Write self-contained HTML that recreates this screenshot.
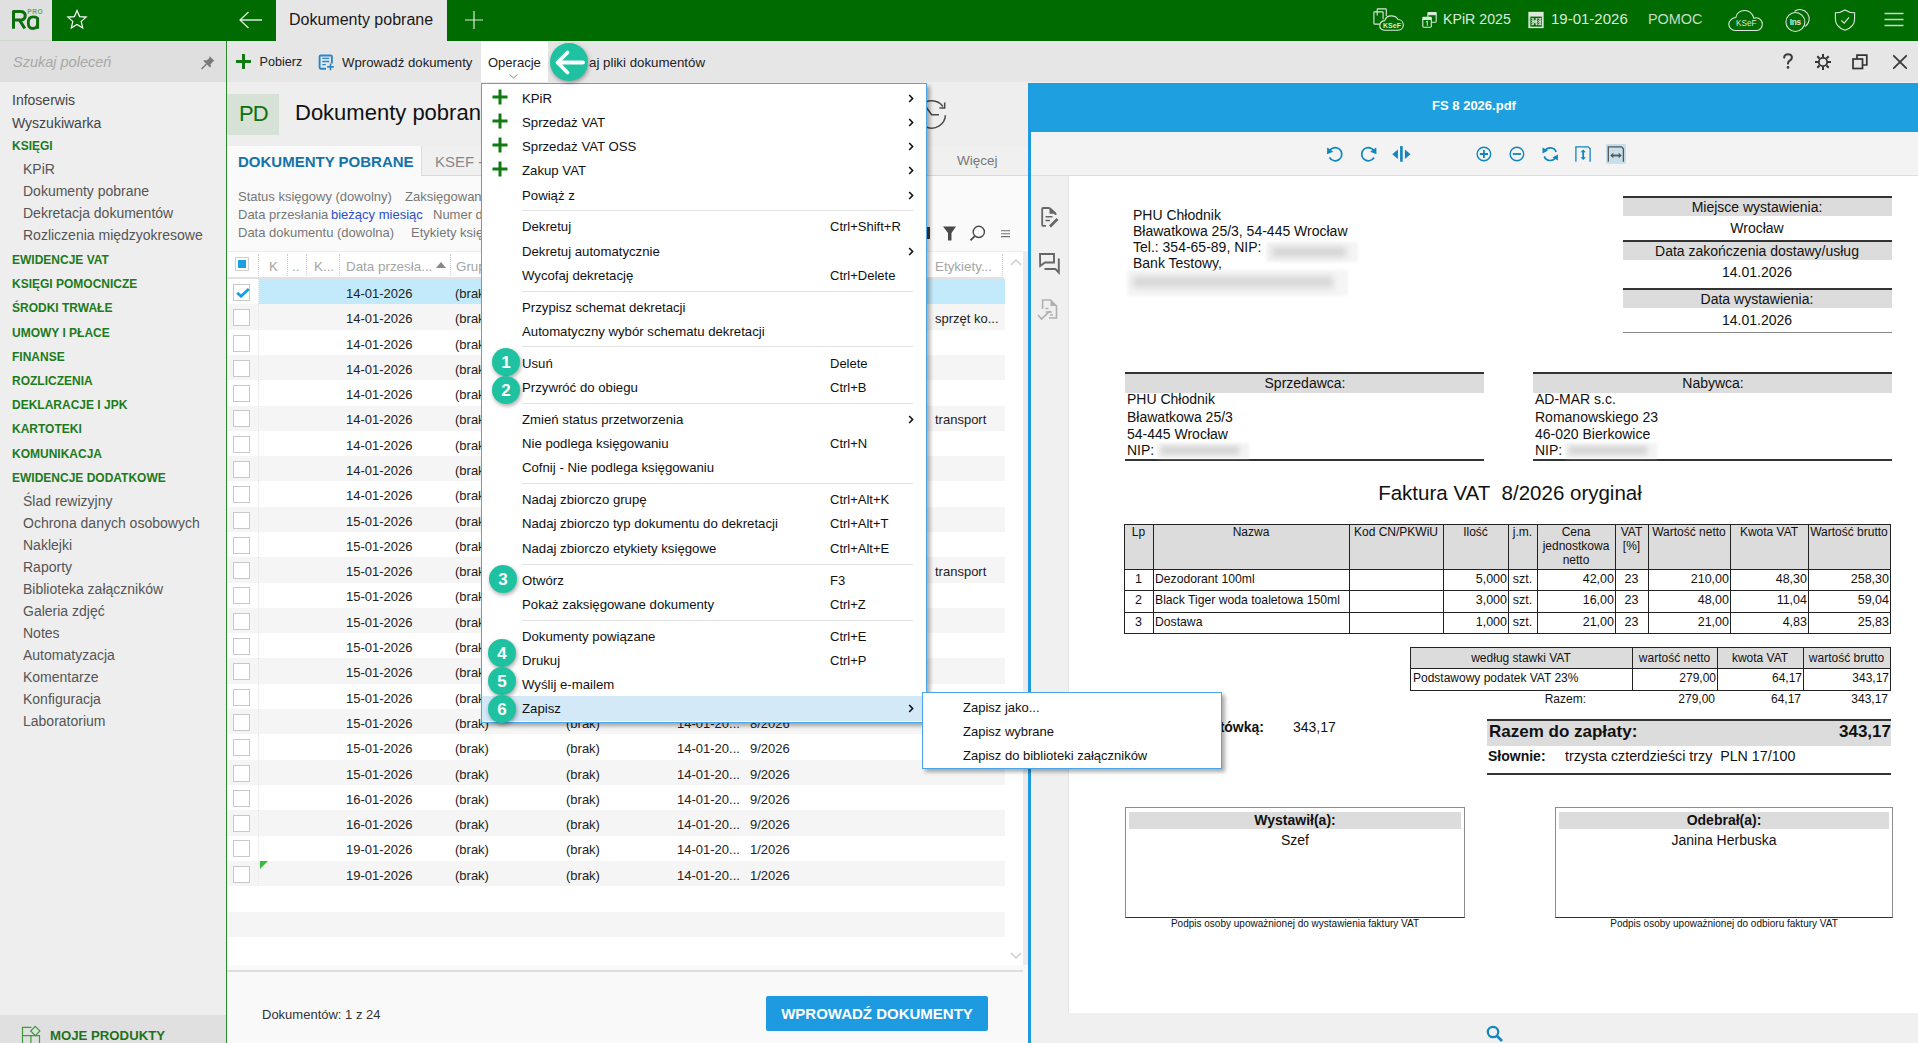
<!DOCTYPE html>
<html><head><meta charset="utf-8"><title>Dokumenty pobrane</title>
<style>
html,body{margin:0;padding:0;width:1918px;height:1043px;overflow:hidden;background:#eeeeee;position:relative}
.t{position:absolute;white-space:nowrap;font-family:"Liberation Sans",sans-serif}
.p{position:absolute;white-space:nowrap;font-family:"Liberation Sans",sans-serif}
</style></head><body>

<div style="position:absolute;left:0;top:0;width:1918px;height:41px;background:#006b00"></div>
<div style="position:absolute;left:0;top:0;width:52px;height:41px;background:#e0e0e0"></div><div style="position:absolute;left:0;top:40px;width:52px;height:1px;background:#cdd8cd"></div>
<svg style="position:absolute;left:0;top:0" width="52" height="40" viewBox="0 0 52 40">
 <path d="M13.5 28.8 V11.5 H20.2 C23.6 11.5 25.2 13.3 25.2 15.8 C25.2 18.4 23.4 20.1 20.2 20.1 H13.5 M19.6 20.1 L24.8 28.5" fill="none" stroke="#0b700b" stroke-width="3" stroke-linejoin="round"/>
 <path d="M37.6 17.5 V28.8" stroke="#0b700b" stroke-width="3"/>
 <path d="M37.6 19.6 C37.6 17.5 35.5 16.8 33 16.8 C29.3 16.8 28.3 19.5 28.3 22.8 C28.3 26.3 29.8 28.5 32.6 28.5 C35.8 28.5 37.6 26.5 37.6 23.5" fill="none" stroke="#0b700b" stroke-width="2.8"/>
 <text x="27.3" y="14.2" font-size="6.6" fill="#5ea95e" font-family="Liberation Sans" font-weight="700" letter-spacing="0.5">PRO</text>
</svg>
<svg style="position:absolute;left:66px;top:9px" width="22" height="21" viewBox="0 0 22 21"><path d="M11 1.5 L13.6 7.6 L20.2 8.1 L15.2 12.4 L16.7 18.9 L11 15.5 L5.3 18.9 L6.8 12.4 L1.8 8.1 L8.4 7.6 Z" fill="none" stroke="#fff" stroke-width="1.2"/></svg>
<svg style="position:absolute;left:238px;top:10px" width="26" height="20" viewBox="0 0 26 20"><path d="M2 10 H24 M10.5 2 L2 10 L10.5 18" fill="none" stroke="#dce9dc" stroke-width="1.3"/></svg>
<div style="position:absolute;left:276px;top:0;width:171px;height:41px;background:#e6e6e6"></div>
<div class="t" style="left:289px;top:10px;font-size:16px;line-height:20px;color:#1a1a1a">Dokumenty pobrane</div>
<svg style="position:absolute;left:464px;top:10px" width="20" height="20" viewBox="0 0 20 20"><path d="M10 1 V19 M1 10 H19" stroke="#dce9dc" stroke-width="1.2"/></svg>
<!-- right icons -->
<svg style="position:absolute;left:1366px;top:2px" width="46" height="36" viewBox="1366 2 46 36">
 <path d="M1377.2 15.5 V9.6 Q1377.2 8.9 1377.9 8.9 H1385.6 Q1386.3 8.9 1386.3 9.6 V16.2" fill="none" stroke="#dce9dc" stroke-width="1.1"/>
 <path d="M1380 24.1 H1374.5 Q1373.9 24.1 1373.9 23.5 V12.5 Q1373.9 11.9 1374.5 11.9 H1382.4 Q1383.1 11.9 1383.1 12.5 V19.3" fill="none" stroke="#dce9dc" stroke-width="1.1"/>
 <path d="M1384.5 30.2 H1398 C1401.3 30.2 1403.3 27.9 1403.3 25 C1403.3 21.9 1401 19.5 1397.9 19.5 C1396.7 17.2 1394.2 15.9 1391.3 15.9 C1387.9 15.9 1385.6 17.9 1384.7 20.6 C1381.7 21 1379.8 23.1 1379.8 25.6 C1379.8 28.3 1381.8 30.2 1384.5 30.2 Z" fill="#006b00" stroke="#dce9dc" stroke-width="1.1"/>
 <text x="1392" y="27.9" font-size="7" fill="#dce9dc" text-anchor="middle" font-family="Liberation Sans" font-weight="700">KSeF</text>
</svg>
<svg style="position:absolute;left:1418px;top:8px" width="24" height="24" viewBox="1418 8 24 24">
 <path d="M1427.9 17 V13.2 Q1427.9 12.6 1428.5 12.6 H1435.6 Q1436.2 12.6 1436.2 13.2 V21.6 Q1436.2 22.2 1435.6 22.2 H1431.7" fill="none" stroke="#dce9dc" stroke-width="1.1"/>
 <rect x="1427.9" y="12.6" width="8.3" height="2.6" fill="#dce9dc"/>
 <rect x="1422.8" y="17.4" width="8.5" height="9.8" rx="0.6" fill="none" stroke="#dce9dc" stroke-width="1.1"/>
 <rect x="1422.8" y="17.4" width="8.5" height="2.6" fill="#dce9dc"/>
 <path d="M1425.8 22.3 L1427.3 21 V25.6" fill="none" stroke="#dce9dc" stroke-width="1"/>
</svg>
<svg style="position:absolute;left:1526px;top:9px" width="20" height="22" viewBox="1526 9 20 22">
 <rect x="1529.8" y="12.6" width="12.6" height="14.8" rx="0.8" fill="none" stroke="#dce9dc" stroke-width="1.1"/>
 <rect x="1529.8" y="12.6" width="12.6" height="4" fill="#dce9dc"/>
 <path d="M1531.5 18.5 h1 M1536 18.5 h1 M1538.3 18.5 h1 M1540.3 18.5 h1 M1531.5 20.6 h1 M1538.3 20.6 h1 M1540.3 20.6 h1 M1531.5 22.6 h1 M1538.3 22.6 h1 M1540.3 22.6 h1 M1531.5 24.6 h1 M1536 24.6 h1 M1538.3 24.6 h1 M1540.3 24.6 h1" stroke="#dce9dc" stroke-width="1.1"/>
 <rect x="1533.3" y="20" width="3.8" height="3.3" fill="#dce9dc" opacity="0.8"/>
</svg>
<div class="t" style="left:1443px;top:9px;font-size:14.2px;line-height:20px;color:#dce9dc">KPiR 2025</div>
<svg style="position:absolute;left:1528px;top:11px" width="17" height="18" viewBox="0 0 17 18">
 <rect x="1" y="1.5" width="14" height="15" fill="none" stroke="#dce9dc" stroke-width="1.3"/>
 <rect x="1" y="1.5" width="14" height="3" fill="#dce9dc"/>
 <path d="M4 8 h2 M7.5 8 h2 M11 8 h2 M4 10.5 h2 M7.5 10.5 h2 M11 10.5 h2 M4 13 h2 M7.5 13 h2 M11 13 h2" stroke="#dce9dc" stroke-width="1.3"/>
</svg>
<div class="t" style="left:1551px;top:9px;font-size:15px;line-height:20px;color:#dce9dc">19-01-2026</div>
<div class="t" style="left:1648px;top:9px;font-size:14.4px;line-height:20px;color:#c9dcc9">POMOC</div>
<svg style="position:absolute;left:1724px;top:6px" width="42" height="28" viewBox="1724 6 42 28">
 <path d="M1735.5 30.4 H1756.5 C1760 30.4 1762.3 27.6 1762.3 24.3 C1762.3 20.6 1759.6 17.8 1756 17.8 C1755.2 17.8 1754.5 17.9 1753.8 18.2 C1752.5 13.6 1749 10.5 1744.5 10.5 C1739.8 10.5 1736.6 13.5 1735.8 17.6 C1731.6 18.1 1728.8 21 1728.8 24.3 C1728.8 27.7 1731.6 30.4 1735.5 30.4 Z" fill="none" stroke="#dce9dc" stroke-width="1.05"/>
 <text x="1746.2" y="26.1" font-size="8.2" fill="#dce9dc" text-anchor="middle" font-family="Liberation Sans">KSeF</text>
</svg>
<svg style="position:absolute;left:1782px;top:6px" width="30" height="28" viewBox="1782 6 30 28">
 <circle cx="1795.4" cy="22" r="9.5" fill="none" stroke="#dce9dc" stroke-width="1.05"/>
 <path d="M1794.5 11.3 A9.2 9.2 0 0 1 1805.3 26.5" fill="none" stroke="#dce9dc" stroke-width="1.05"/>
 <text x="1795.4" y="25" font-size="8.3" fill="#dce9dc" text-anchor="middle" font-family="Liberation Sans" font-weight="700" letter-spacing="-0.3">Ins</text>
</svg>
<svg style="position:absolute;left:1832px;top:7px" width="26" height="26" viewBox="1832 7 26 26">
 <path d="M1845 10 C1848 12 1851.3 12.8 1854.6 12.8 V19 C1854.6 24.5 1850.8 28.3 1845 30.3 C1839.2 28.3 1835.4 24.5 1835.4 19 V12.8 C1838.7 12.8 1842 12 1845 10 Z" fill="none" stroke="#dce9dc" stroke-width="1.1"/>
 <path d="M1841.2 20.3 L1844.2 23.2 L1849 17.3" fill="none" stroke="#dce9dc" stroke-width="1.1"/>
</svg>
<svg style="position:absolute;left:1884px;top:12px" width="21" height="16" viewBox="0 0 21 16">
 <path d="M0.5 1.5 H19.5 M0.5 7.5 H19.5 M0.5 13.5 H19.5" stroke="#c4dac4" stroke-width="1.3"/>
</svg>

<div style="position:absolute;left:0;top:41px;width:226px;height:1002px;background:#eeeeee"></div>
<div style="position:absolute;left:0;top:41px;width:226px;height:41px;background:#dfdfdf"></div>
<div class="t" style="left:13px;top:52px;font-size:14.5px;line-height:20px;color:#a8a8a8;font-style:italic">Szukaj poleceń</div>
<svg style="position:absolute;left:200px;top:55px" width="16" height="15" viewBox="0 0 16 15">
 <path d="M9.5 1 L14.5 6 L13 6.5 L10.5 9.5 L11 11.5 L10 12.5 L3.5 6 L4.5 5 L6.5 5.5 L9.5 3 Z" fill="#7a7a7a"/>
 <path d="M6.5 9 L1.5 14" stroke="#7a7a7a" stroke-width="1.4"/></svg>
<div style="position:absolute;left:226px;top:41px;width:1.4px;height:1002px;background:#2a8a2a"></div>
<div class="t" style="left:12px;top:91px;font-size:14px;line-height:18px;color:#444">Infoserwis</div>
<div class="t" style="left:12px;top:114px;font-size:14px;line-height:18px;color:#444">Wyszukiwarka</div>
<div class="t" style="left:12px;top:138px;font-size:12px;line-height:16px;color:#1d7b1d;font-weight:700">KSIĘGI</div>
<div class="t" style="left:23px;top:160px;font-size:14px;line-height:18px;color:#555">KPiR</div>
<div class="t" style="left:23px;top:182px;font-size:14px;line-height:18px;color:#555">Dokumenty pobrane</div>
<div class="t" style="left:23px;top:204px;font-size:14px;line-height:18px;color:#555">Dekretacja dokumentów</div>
<div class="t" style="left:23px;top:226px;font-size:14px;line-height:18px;color:#555">Rozliczenia międzyokresowe</div>
<div class="t" style="left:12px;top:252px;font-size:12px;line-height:16px;color:#1d7b1d;font-weight:700">EWIDENCJE VAT</div>
<div class="t" style="left:12px;top:276px;font-size:12px;line-height:16px;color:#1d7b1d;font-weight:700">KSIĘGI POMOCNICZE</div>
<div class="t" style="left:12px;top:300px;font-size:12px;line-height:16px;color:#1d7b1d;font-weight:700">ŚRODKI TRWAŁE</div>
<div class="t" style="left:12px;top:325px;font-size:12px;line-height:16px;color:#1d7b1d;font-weight:700">UMOWY I PŁACE</div>
<div class="t" style="left:12px;top:349px;font-size:12px;line-height:16px;color:#1d7b1d;font-weight:700">FINANSE</div>
<div class="t" style="left:12px;top:373px;font-size:12px;line-height:16px;color:#1d7b1d;font-weight:700">ROZLICZENIA</div>
<div class="t" style="left:12px;top:397px;font-size:12px;line-height:16px;color:#1d7b1d;font-weight:700">DEKLARACJE I JPK</div>
<div class="t" style="left:12px;top:421px;font-size:12px;line-height:16px;color:#1d7b1d;font-weight:700">KARTOTEKI</div>
<div class="t" style="left:12px;top:446px;font-size:12px;line-height:16px;color:#1d7b1d;font-weight:700">KOMUNIKACJA</div>
<div class="t" style="left:12px;top:470px;font-size:12px;line-height:16px;color:#1d7b1d;font-weight:700">EWIDENCJE DODATKOWE</div>
<div class="t" style="left:23px;top:492px;font-size:14px;line-height:18px;color:#555">Ślad rewizyjny</div>
<div class="t" style="left:23px;top:514px;font-size:14px;line-height:18px;color:#555">Ochrona danych osobowych</div>
<div class="t" style="left:23px;top:536px;font-size:14px;line-height:18px;color:#555">Naklejki</div>
<div class="t" style="left:23px;top:558px;font-size:14px;line-height:18px;color:#555">Raporty</div>
<div class="t" style="left:23px;top:580px;font-size:14px;line-height:18px;color:#555">Biblioteka załączników</div>
<div class="t" style="left:23px;top:602px;font-size:14px;line-height:18px;color:#555">Galeria zdjęć</div>
<div class="t" style="left:23px;top:624px;font-size:14px;line-height:18px;color:#555">Notes</div>
<div class="t" style="left:23px;top:646px;font-size:14px;line-height:18px;color:#555">Automatyzacja</div>
<div class="t" style="left:23px;top:668px;font-size:14px;line-height:18px;color:#555">Komentarze</div>
<div class="t" style="left:23px;top:690px;font-size:14px;line-height:18px;color:#555">Konfiguracja</div>
<div class="t" style="left:23px;top:712px;font-size:14px;line-height:18px;color:#555">Laboratorium</div>
<div style="position:absolute;left:0;top:1015px;width:226px;height:28px;background:#e0e0e0"></div>
<svg style="position:absolute;left:20px;top:1024px" width="24" height="19" viewBox="20 1024 24 19">
 <path d="M22.5 1043 V1027.3 H31.5 M22.5 1035.7 H39.5 V1043 M30.9 1035.7 V1043" fill="none" stroke="#3d9a3d" stroke-width="1.2"/>
 <path d="M35.3 1026.4 L39.9 1031 L35.3 1035.6 L30.7 1031 Z" fill="#e0e0e0" stroke="#3d9a3d" stroke-width="1.2"/></svg>
<div class="t" style="left:50px;top:1027px;font-size:13.2px;line-height:17px;color:#1e721e;font-weight:700">MOJE PRODUKTY</div>

<div style="position:absolute;left:227px;top:41px;width:1691px;height:41px;background:#e6e6e6"></div>
<svg style="position:absolute;left:236px;top:54px" width="15" height="15" viewBox="0 0 15 15"><path d="M7.5 0 V15 M0 7.5 H15" stroke="#127a12" stroke-width="3"/></svg>
<div class="t" style="left:259.5px;top:54px;font-size:12.6px;line-height:17px;color:#222">Pobierz</div>
<svg style="position:absolute;left:317px;top:53px" width="18" height="19" viewBox="317 53 18 19">
 <path d="M326 68.8 H320.8 Q319.6 68.8 319.6 67.6 V56.7 Q319.6 55.5 320.8 55.5 H330.7 Q331.9 55.5 331.9 56.7 V63.5" fill="none" stroke="#2a86c9" stroke-width="1.9"/>
 <path d="M322.3 58.4 H329.2 M322.3 61.5 H329.2 M322.3 64.6 H325.8" stroke="#2a86c9" stroke-width="1.3"/>
 <path d="M330.5 63.6 V70.2 M327.2 66.9 H333.8" stroke="#2a86c9" stroke-width="1.6"/></svg>
<div class="t" style="left:342px;top:54px;font-size:13.2px;line-height:17px;color:#222">Wprowadź dokumenty</div>
<div style="position:absolute;left:481px;top:41px;width:67px;height:42px;background:#ffffff"></div>
<div class="t" style="left:488px;top:54px;font-size:13px;line-height:17px;color:#222">Operacje</div>
<svg style="position:absolute;left:509px;top:74px" width="9" height="5" viewBox="0 0 9 5"><path d="M0.5 0.5 L4.5 4 L8.5 0.5" fill="none" stroke="#888" stroke-width="1"/></svg>
<div class="t" style="left:589px;top:54px;font-size:13.3px;line-height:17px;color:#222">aj pliki dokumentów</div>
<svg style="position:absolute;left:1782px;top:53px" width="12" height="17" viewBox="0 0 12 17"><path d="M2.2 4.6 C2.2 2.4 4 1.3 6 1.3 C8.3 1.3 9.9 2.6 9.9 4.5 C9.9 6.4 8.6 7.1 7.3 7.9 C6.3 8.5 6 9.2 6 10.6" fill="none" stroke="#3a3a3a" stroke-width="2.1" stroke-linecap="round"/><circle cx="6" cy="14.4" r="1.3" fill="#3a3a3a"/></svg>
<svg style="position:absolute;left:1814px;top:53px" width="18" height="18" viewBox="0 0 18 18">
 <circle cx="9" cy="9" r="4.2" fill="none" stroke="#333" stroke-width="1.8"/>
 <path d="M9 1 V4 M9 14 V17 M1 9 H4 M14 9 H17 M3.3 3.3 L5.5 5.5 M12.5 12.5 L14.7 14.7 M3.3 14.7 L5.5 12.5 M12.5 5.5 L14.7 3.3" stroke="#333" stroke-width="2"/></svg>
<svg style="position:absolute;left:1852px;top:54px" width="16" height="16" viewBox="0 0 16 16">
 <rect x="1" y="5" width="9.5" height="9.5" fill="none" stroke="#333" stroke-width="1.7"/>
 <path d="M5 5 V1.2 H14.8 V11 H10.5" fill="none" stroke="#333" stroke-width="1.7"/></svg>
<svg style="position:absolute;left:1892px;top:54px" width="16" height="16" viewBox="0 0 16 16"><path d="M1.8 1.8 L14.2 14.2 M14.2 1.8 L1.8 14.2" stroke="#3a3a3a" stroke-width="1.8" stroke-linecap="round"/></svg>

<div style="position:absolute;left:227px;top:82px;width:801px;height:961px;background:#eeeeee"></div>
<div style="position:absolute;left:227px;top:94px;width:52px;height:41px;background:#d6e2d6"></div>
<div class="t" style="left:239px;top:101px;font-size:22px;line-height:26px;color:#0f700f;letter-spacing:-1px">PD</div>
<div class="t" style="left:295px;top:100px;font-size:22px;line-height:26px;color:#111">Dokumenty pobrane</div>
<svg style="position:absolute;left:912px;top:95px" width="40" height="38" viewBox="912 95 40 38">
 <path d="M945.4 115.2 A13.7 13.7 0 1 1 942.9 106.5" fill="none" stroke="#4a4a4a" stroke-width="1.5"/>
 <path d="M939.4 107.9 H944.7 V102.4" fill="none" stroke="#4a4a4a" stroke-width="1.5"/>
 <path d="M926.5 107.5 L931.6 114.8 H939" fill="none" stroke="#4a4a4a" stroke-width="1.5"/></svg>
<div style="position:absolute;left:227px;top:146px;width:801px;height:29px;background:#f0f0f0"></div>
<div style="position:absolute;left:227px;top:175px;width:801px;height:1px;background:#d8d8d8"></div>
<div style="position:absolute;left:227px;top:146px;width:195px;height:30px;background:#fafafa;border-right:1px solid #dcdcdc;box-sizing:border-box"></div>
<div class="t" style="left:238px;top:152px;font-size:15px;line-height:19px;color:#1473a8;font-weight:700">DOKUMENTY POBRANE</div>
<div class="t" style="left:435px;top:152px;font-size:15px;line-height:19px;color:#888">KSEF - dokumenty</div>
<div class="t" style="left:957px;top:152px;font-size:13.5px;line-height:18px;color:#777">Więcej</div>
<div style="position:absolute;left:227px;top:176px;width:801px;height:75px;background:#fafafa"></div>
<div class="t" style="left:238px;top:188px;font-size:13px;line-height:18px;color:#777">Status księgowy (dowolny)</div>
<div class="t" style="left:405px;top:188px;font-size:13px;line-height:18px;color:#777">Zaksięgowane (dowolne)</div>
<div class="t" style="left:238px;top:206px;font-size:13px;line-height:18px;color:#777">Data przesłania </div>
<div class="t" style="left:331px;top:206px;font-size:13px;line-height:18px;color:#2b4fc8">bieżący miesiąc</div>
<div class="t" style="left:433px;top:206px;font-size:13px;line-height:18px;color:#777">Numer dokumentu</div>
<div class="t" style="left:238px;top:224px;font-size:13px;line-height:18px;color:#777">Data dokumentu (dowolna)</div>
<div class="t" style="left:411px;top:224px;font-size:13px;line-height:18px;color:#777">Etykiety księgowe</div>
<svg style="position:absolute;left:922px;top:224px" width="90" height="18" viewBox="0 0 90 18">
 <rect x="1" y="3" width="7" height="12" fill="#3a3a3a"/>
 <path d="M21 2.5 H34 L29.5 9 V16.5 H26 V9 Z" fill="#4a4a4a"/>
 <circle cx="56.8" cy="7.9" r="5.6" fill="none" stroke="#4a4a4a" stroke-width="1.4"/><path d="M53 11.8 L48.5 16.3" stroke="#4a4a4a" stroke-width="1.8"/>
 <path d="M79 6.8 H88 M79 9.7 H88 M79 12.6 H88" stroke="#707070" stroke-width="1.1"/></svg>
<div style="position:absolute;left:227px;top:251px;width:801px;height:1px;background:#ececec"></div>
<div style="position:absolute;left:227px;top:252px;width:796px;height:713px;background:#ffffff"></div>
<div style="position:absolute;left:1023px;top:252px;width:5px;height:713px;background:#ebebeb"></div>
<div style="position:absolute;left:227px;top:277px;width:777px;height:2px;background:#e2e2e2"></div>
<div style="position:absolute;left:258px;top:254px;width:0;height:22px;border-left:1.5px dotted #cfcfcf"></div>
<div style="position:absolute;left:287px;top:254px;width:0;height:22px;border-left:1.5px dotted #cfcfcf"></div>
<div style="position:absolute;left:306px;top:254px;width:0;height:22px;border-left:1.5px dotted #cfcfcf"></div>
<div style="position:absolute;left:339px;top:254px;width:0;height:22px;border-left:1.5px dotted #cfcfcf"></div>
<div style="position:absolute;left:450px;top:254px;width:0;height:22px;border-left:1.5px dotted #cfcfcf"></div>
<div style="position:absolute;left:926px;top:254px;width:0;height:22px;border-left:1.5px dotted #cfcfcf"></div>
<div style="position:absolute;left:1002px;top:254px;width:0;height:22px;border-left:1.5px dotted #cfcfcf"></div>
<div style="position:absolute;left:235px;top:257px;width:14px;height:14px;border:1px solid #d0d0d0;box-sizing:border-box;background:#fff"></div>
<div style="position:absolute;left:238px;top:260px;width:8px;height:8px;background:#1aa0e0"></div>
<div class="t" style="left:269px;top:258px;font-size:13.4px;line-height:18px;color:#a5a5a5">K</div>
<div class="t" style="left:292px;top:258px;font-size:13.4px;line-height:18px;color:#a5a5a5">..</div>
<div class="t" style="left:314px;top:258px;font-size:13.4px;line-height:18px;color:#a5a5a5">K...</div>
<div class="t" style="left:346px;top:258px;font-size:13.4px;line-height:18px;color:#a5a5a5">Data przesła...</div>
<div class="t" style="left:456px;top:258px;font-size:13.4px;line-height:18px;color:#a5a5a5">Grupa</div>
<div class="t" style="left:935px;top:258px;font-size:13.4px;line-height:18px;color:#a5a5a5">Etykiety...</div>
<svg style="position:absolute;left:436px;top:262px" width="10" height="6" viewBox="0 0 10 6"><path d="M0 6 L5 0 L10 6 Z" fill="#888"/></svg>
<svg style="position:absolute;left:1010px;top:258px" width="12" height="8" viewBox="0 0 12 8"><path d="M1 7 L6 2 L11 7" fill="none" stroke="#ccc" stroke-width="1.5"/></svg>
<svg style="position:absolute;left:1010px;top:952px" width="12" height="8" viewBox="0 0 12 8"><path d="M1 1 L6 6 L11 1" fill="none" stroke="#ccc" stroke-width="1.5"/></svg>
<div style="position:absolute;left:259px;top:279px;width:746px;height:25px;background:#c2eafa"></div>
<div style="position:absolute;left:233px;top:284px;width:17px;height:17px;border:1px solid #c9c9c9;box-sizing:border-box;background:#fff"></div>
<div style="position:absolute;left:258px;top:279px;width:0;height:25px;border-left:1px dotted #e4e4e4"></div>
<div class="t" style="left:346px;top:285px;font-size:13px;line-height:18px;color:#222">14-01-2026</div>
<div class="t" style="left:455px;top:285px;font-size:13px;line-height:18px;color:#222">(brak)</div>
<div class="t" style="left:566px;top:285px;font-size:13px;line-height:18px;color:#222">(brak)</div>
<div class="t" style="left:677px;top:285px;font-size:13px;line-height:18px;color:#222">14-01-20...</div>
<div class="t" style="left:750px;top:285px;font-size:13px;line-height:18px;color:#222">8/2026</div>
<div style="position:absolute;left:227px;top:304px;width:778px;height:26px;background:#f5f5f5"></div>
<div style="position:absolute;left:233px;top:309px;width:17px;height:17px;border:1px solid #c9c9c9;box-sizing:border-box;background:#fff"></div>
<div style="position:absolute;left:258px;top:304px;width:0;height:26px;border-left:1px dotted #e4e4e4"></div>
<div class="t" style="left:346px;top:310px;font-size:13px;line-height:18px;color:#222">14-01-2026</div>
<div class="t" style="left:455px;top:310px;font-size:13px;line-height:18px;color:#222">(brak)</div>
<div class="t" style="left:566px;top:310px;font-size:13px;line-height:18px;color:#222">(brak)</div>
<div class="t" style="left:677px;top:310px;font-size:13px;line-height:18px;color:#222">14-01-20...</div>
<div class="t" style="left:750px;top:310px;font-size:13px;line-height:18px;color:#222">8/2026</div>
<div class="t" style="left:935px;top:310px;font-size:13px;line-height:18px;color:#222">sprzęt ko...</div>
<div style="position:absolute;left:227px;top:330px;width:778px;height:25px;background:#ffffff"></div>
<div style="position:absolute;left:233px;top:335px;width:17px;height:17px;border:1px solid #c9c9c9;box-sizing:border-box;background:#fff"></div>
<div style="position:absolute;left:258px;top:330px;width:0;height:25px;border-left:1px dotted #e4e4e4"></div>
<div class="t" style="left:346px;top:336px;font-size:13px;line-height:18px;color:#222">14-01-2026</div>
<div class="t" style="left:455px;top:336px;font-size:13px;line-height:18px;color:#222">(brak)</div>
<div class="t" style="left:566px;top:336px;font-size:13px;line-height:18px;color:#222">(brak)</div>
<div class="t" style="left:677px;top:336px;font-size:13px;line-height:18px;color:#222">14-01-20...</div>
<div class="t" style="left:750px;top:336px;font-size:13px;line-height:18px;color:#222">8/2026</div>
<div style="position:absolute;left:227px;top:355px;width:778px;height:25px;background:#f5f5f5"></div>
<div style="position:absolute;left:233px;top:360px;width:17px;height:17px;border:1px solid #c9c9c9;box-sizing:border-box;background:#fff"></div>
<div style="position:absolute;left:258px;top:355px;width:0;height:25px;border-left:1px dotted #e4e4e4"></div>
<div class="t" style="left:346px;top:361px;font-size:13px;line-height:18px;color:#222">14-01-2026</div>
<div class="t" style="left:455px;top:361px;font-size:13px;line-height:18px;color:#222">(brak)</div>
<div class="t" style="left:566px;top:361px;font-size:13px;line-height:18px;color:#222">(brak)</div>
<div class="t" style="left:677px;top:361px;font-size:13px;line-height:18px;color:#222">14-01-20...</div>
<div class="t" style="left:750px;top:361px;font-size:13px;line-height:18px;color:#222">8/2026</div>
<div style="position:absolute;left:227px;top:380px;width:778px;height:26px;background:#ffffff"></div>
<div style="position:absolute;left:233px;top:385px;width:17px;height:17px;border:1px solid #c9c9c9;box-sizing:border-box;background:#fff"></div>
<div style="position:absolute;left:258px;top:380px;width:0;height:26px;border-left:1px dotted #e4e4e4"></div>
<div class="t" style="left:346px;top:386px;font-size:13px;line-height:18px;color:#222">14-01-2026</div>
<div class="t" style="left:455px;top:386px;font-size:13px;line-height:18px;color:#222">(brak)</div>
<div class="t" style="left:566px;top:386px;font-size:13px;line-height:18px;color:#222">(brak)</div>
<div class="t" style="left:677px;top:386px;font-size:13px;line-height:18px;color:#222">14-01-20...</div>
<div class="t" style="left:750px;top:386px;font-size:13px;line-height:18px;color:#222">8/2026</div>
<div style="position:absolute;left:227px;top:406px;width:778px;height:25px;background:#f5f5f5"></div>
<div style="position:absolute;left:233px;top:410px;width:17px;height:17px;border:1px solid #c9c9c9;box-sizing:border-box;background:#fff"></div>
<div style="position:absolute;left:258px;top:406px;width:0;height:25px;border-left:1px dotted #e4e4e4"></div>
<div class="t" style="left:346px;top:411px;font-size:13px;line-height:18px;color:#222">14-01-2026</div>
<div class="t" style="left:455px;top:411px;font-size:13px;line-height:18px;color:#222">(brak)</div>
<div class="t" style="left:566px;top:411px;font-size:13px;line-height:18px;color:#222">(brak)</div>
<div class="t" style="left:677px;top:411px;font-size:13px;line-height:18px;color:#222">14-01-20...</div>
<div class="t" style="left:750px;top:411px;font-size:13px;line-height:18px;color:#222">8/2026</div>
<div class="t" style="left:935px;top:411px;font-size:13px;line-height:18px;color:#222">transport</div>
<div style="position:absolute;left:227px;top:431px;width:778px;height:25px;background:#ffffff"></div>
<div style="position:absolute;left:233px;top:436px;width:17px;height:17px;border:1px solid #c9c9c9;box-sizing:border-box;background:#fff"></div>
<div style="position:absolute;left:258px;top:431px;width:0;height:25px;border-left:1px dotted #e4e4e4"></div>
<div class="t" style="left:346px;top:437px;font-size:13px;line-height:18px;color:#222">14-01-2026</div>
<div class="t" style="left:455px;top:437px;font-size:13px;line-height:18px;color:#222">(brak)</div>
<div class="t" style="left:566px;top:437px;font-size:13px;line-height:18px;color:#222">(brak)</div>
<div class="t" style="left:677px;top:437px;font-size:13px;line-height:18px;color:#222">14-01-20...</div>
<div class="t" style="left:750px;top:437px;font-size:13px;line-height:18px;color:#222">8/2026</div>
<div style="position:absolute;left:227px;top:456px;width:778px;height:25px;background:#f5f5f5"></div>
<div style="position:absolute;left:233px;top:461px;width:17px;height:17px;border:1px solid #c9c9c9;box-sizing:border-box;background:#fff"></div>
<div style="position:absolute;left:258px;top:456px;width:0;height:25px;border-left:1px dotted #e4e4e4"></div>
<div class="t" style="left:346px;top:462px;font-size:13px;line-height:18px;color:#222">14-01-2026</div>
<div class="t" style="left:455px;top:462px;font-size:13px;line-height:18px;color:#222">(brak)</div>
<div class="t" style="left:566px;top:462px;font-size:13px;line-height:18px;color:#222">(brak)</div>
<div class="t" style="left:677px;top:462px;font-size:13px;line-height:18px;color:#222">14-01-20...</div>
<div class="t" style="left:750px;top:462px;font-size:13px;line-height:18px;color:#222">8/2026</div>
<div style="position:absolute;left:227px;top:481px;width:778px;height:26px;background:#ffffff"></div>
<div style="position:absolute;left:233px;top:486px;width:17px;height:17px;border:1px solid #c9c9c9;box-sizing:border-box;background:#fff"></div>
<div style="position:absolute;left:258px;top:481px;width:0;height:26px;border-left:1px dotted #e4e4e4"></div>
<div class="t" style="left:346px;top:487px;font-size:13px;line-height:18px;color:#222">14-01-2026</div>
<div class="t" style="left:455px;top:487px;font-size:13px;line-height:18px;color:#222">(brak)</div>
<div class="t" style="left:566px;top:487px;font-size:13px;line-height:18px;color:#222">(brak)</div>
<div class="t" style="left:677px;top:487px;font-size:13px;line-height:18px;color:#222">14-01-20...</div>
<div class="t" style="left:750px;top:487px;font-size:13px;line-height:18px;color:#222">8/2026</div>
<div style="position:absolute;left:227px;top:507px;width:778px;height:25px;background:#f5f5f5"></div>
<div style="position:absolute;left:233px;top:512px;width:17px;height:17px;border:1px solid #c9c9c9;box-sizing:border-box;background:#fff"></div>
<div style="position:absolute;left:258px;top:507px;width:0;height:25px;border-left:1px dotted #e4e4e4"></div>
<div class="t" style="left:346px;top:513px;font-size:13px;line-height:18px;color:#222">15-01-2026</div>
<div class="t" style="left:455px;top:513px;font-size:13px;line-height:18px;color:#222">(brak)</div>
<div class="t" style="left:566px;top:513px;font-size:13px;line-height:18px;color:#222">(brak)</div>
<div class="t" style="left:677px;top:513px;font-size:13px;line-height:18px;color:#222">14-01-20...</div>
<div class="t" style="left:750px;top:513px;font-size:13px;line-height:18px;color:#222">8/2026</div>
<div style="position:absolute;left:227px;top:532px;width:778px;height:25px;background:#ffffff"></div>
<div style="position:absolute;left:233px;top:537px;width:17px;height:17px;border:1px solid #c9c9c9;box-sizing:border-box;background:#fff"></div>
<div style="position:absolute;left:258px;top:532px;width:0;height:25px;border-left:1px dotted #e4e4e4"></div>
<div class="t" style="left:346px;top:538px;font-size:13px;line-height:18px;color:#222">15-01-2026</div>
<div class="t" style="left:455px;top:538px;font-size:13px;line-height:18px;color:#222">(brak)</div>
<div class="t" style="left:566px;top:538px;font-size:13px;line-height:18px;color:#222">(brak)</div>
<div class="t" style="left:677px;top:538px;font-size:13px;line-height:18px;color:#222">14-01-20...</div>
<div class="t" style="left:750px;top:538px;font-size:13px;line-height:18px;color:#222">8/2026</div>
<div style="position:absolute;left:227px;top:557px;width:778px;height:26px;background:#f5f5f5"></div>
<div style="position:absolute;left:233px;top:562px;width:17px;height:17px;border:1px solid #c9c9c9;box-sizing:border-box;background:#fff"></div>
<div style="position:absolute;left:258px;top:557px;width:0;height:26px;border-left:1px dotted #e4e4e4"></div>
<div class="t" style="left:346px;top:563px;font-size:13px;line-height:18px;color:#222">15-01-2026</div>
<div class="t" style="left:455px;top:563px;font-size:13px;line-height:18px;color:#222">(brak)</div>
<div class="t" style="left:566px;top:563px;font-size:13px;line-height:18px;color:#222">(brak)</div>
<div class="t" style="left:677px;top:563px;font-size:13px;line-height:18px;color:#222">14-01-20...</div>
<div class="t" style="left:750px;top:563px;font-size:13px;line-height:18px;color:#222">8/2026</div>
<div class="t" style="left:935px;top:563px;font-size:13px;line-height:18px;color:#222">transport</div>
<div style="position:absolute;left:227px;top:583px;width:778px;height:25px;background:#ffffff"></div>
<div style="position:absolute;left:233px;top:587px;width:17px;height:17px;border:1px solid #c9c9c9;box-sizing:border-box;background:#fff"></div>
<div style="position:absolute;left:258px;top:583px;width:0;height:25px;border-left:1px dotted #e4e4e4"></div>
<div class="t" style="left:346px;top:588px;font-size:13px;line-height:18px;color:#222">15-01-2026</div>
<div class="t" style="left:455px;top:588px;font-size:13px;line-height:18px;color:#222">(brak)</div>
<div class="t" style="left:566px;top:588px;font-size:13px;line-height:18px;color:#222">(brak)</div>
<div class="t" style="left:677px;top:588px;font-size:13px;line-height:18px;color:#222">14-01-20...</div>
<div class="t" style="left:750px;top:588px;font-size:13px;line-height:18px;color:#222">8/2026</div>
<div style="position:absolute;left:227px;top:608px;width:778px;height:25px;background:#f5f5f5"></div>
<div style="position:absolute;left:233px;top:613px;width:17px;height:17px;border:1px solid #c9c9c9;box-sizing:border-box;background:#fff"></div>
<div style="position:absolute;left:258px;top:608px;width:0;height:25px;border-left:1px dotted #e4e4e4"></div>
<div class="t" style="left:346px;top:614px;font-size:13px;line-height:18px;color:#222">15-01-2026</div>
<div class="t" style="left:455px;top:614px;font-size:13px;line-height:18px;color:#222">(brak)</div>
<div class="t" style="left:566px;top:614px;font-size:13px;line-height:18px;color:#222">(brak)</div>
<div class="t" style="left:677px;top:614px;font-size:13px;line-height:18px;color:#222">14-01-20...</div>
<div class="t" style="left:750px;top:614px;font-size:13px;line-height:18px;color:#222">8/2026</div>
<div style="position:absolute;left:227px;top:633px;width:778px;height:25px;background:#ffffff"></div>
<div style="position:absolute;left:233px;top:638px;width:17px;height:17px;border:1px solid #c9c9c9;box-sizing:border-box;background:#fff"></div>
<div style="position:absolute;left:258px;top:633px;width:0;height:25px;border-left:1px dotted #e4e4e4"></div>
<div class="t" style="left:346px;top:639px;font-size:13px;line-height:18px;color:#222">15-01-2026</div>
<div class="t" style="left:455px;top:639px;font-size:13px;line-height:18px;color:#222">(brak)</div>
<div class="t" style="left:566px;top:639px;font-size:13px;line-height:18px;color:#222">(brak)</div>
<div class="t" style="left:677px;top:639px;font-size:13px;line-height:18px;color:#222">14-01-20...</div>
<div class="t" style="left:750px;top:639px;font-size:13px;line-height:18px;color:#222">8/2026</div>
<div style="position:absolute;left:227px;top:658px;width:778px;height:26px;background:#f5f5f5"></div>
<div style="position:absolute;left:233px;top:663px;width:17px;height:17px;border:1px solid #c9c9c9;box-sizing:border-box;background:#fff"></div>
<div style="position:absolute;left:258px;top:658px;width:0;height:26px;border-left:1px dotted #e4e4e4"></div>
<div class="t" style="left:346px;top:664px;font-size:13px;line-height:18px;color:#222">15-01-2026</div>
<div class="t" style="left:455px;top:664px;font-size:13px;line-height:18px;color:#222">(brak)</div>
<div class="t" style="left:566px;top:664px;font-size:13px;line-height:18px;color:#222">(brak)</div>
<div class="t" style="left:677px;top:664px;font-size:13px;line-height:18px;color:#222">14-01-20...</div>
<div class="t" style="left:750px;top:664px;font-size:13px;line-height:18px;color:#222">8/2026</div>
<div style="position:absolute;left:227px;top:684px;width:778px;height:25px;background:#ffffff"></div>
<div style="position:absolute;left:233px;top:689px;width:17px;height:17px;border:1px solid #c9c9c9;box-sizing:border-box;background:#fff"></div>
<div style="position:absolute;left:258px;top:684px;width:0;height:25px;border-left:1px dotted #e4e4e4"></div>
<div class="t" style="left:346px;top:690px;font-size:13px;line-height:18px;color:#222">15-01-2026</div>
<div class="t" style="left:455px;top:690px;font-size:13px;line-height:18px;color:#222">(brak)</div>
<div class="t" style="left:566px;top:690px;font-size:13px;line-height:18px;color:#222">(brak)</div>
<div class="t" style="left:677px;top:690px;font-size:13px;line-height:18px;color:#222">14-01-20...</div>
<div class="t" style="left:750px;top:690px;font-size:13px;line-height:18px;color:#222">8/2026</div>
<div style="position:absolute;left:227px;top:709px;width:778px;height:25px;background:#f5f5f5"></div>
<div style="position:absolute;left:233px;top:714px;width:17px;height:17px;border:1px solid #c9c9c9;box-sizing:border-box;background:#fff"></div>
<div style="position:absolute;left:258px;top:709px;width:0;height:25px;border-left:1px dotted #e4e4e4"></div>
<div class="t" style="left:346px;top:715px;font-size:13px;line-height:18px;color:#222">15-01-2026</div>
<div class="t" style="left:455px;top:715px;font-size:13px;line-height:18px;color:#222">(brak)</div>
<div class="t" style="left:566px;top:715px;font-size:13px;line-height:18px;color:#222">(brak)</div>
<div class="t" style="left:677px;top:715px;font-size:13px;line-height:18px;color:#222">14-01-20...</div>
<div class="t" style="left:750px;top:715px;font-size:13px;line-height:18px;color:#222">8/2026</div>
<div style="position:absolute;left:227px;top:734px;width:778px;height:26px;background:#ffffff"></div>
<div style="position:absolute;left:233px;top:739px;width:17px;height:17px;border:1px solid #c9c9c9;box-sizing:border-box;background:#fff"></div>
<div style="position:absolute;left:258px;top:734px;width:0;height:26px;border-left:1px dotted #e4e4e4"></div>
<div class="t" style="left:346px;top:740px;font-size:13px;line-height:18px;color:#222">15-01-2026</div>
<div class="t" style="left:455px;top:740px;font-size:13px;line-height:18px;color:#222">(brak)</div>
<div class="t" style="left:566px;top:740px;font-size:13px;line-height:18px;color:#222">(brak)</div>
<div class="t" style="left:677px;top:740px;font-size:13px;line-height:18px;color:#222">14-01-20...</div>
<div class="t" style="left:750px;top:740px;font-size:13px;line-height:18px;color:#222">9/2026</div>
<div style="position:absolute;left:227px;top:760px;width:778px;height:25px;background:#f5f5f5"></div>
<div style="position:absolute;left:233px;top:765px;width:17px;height:17px;border:1px solid #c9c9c9;box-sizing:border-box;background:#fff"></div>
<div style="position:absolute;left:258px;top:760px;width:0;height:25px;border-left:1px dotted #e4e4e4"></div>
<div class="t" style="left:346px;top:766px;font-size:13px;line-height:18px;color:#222">15-01-2026</div>
<div class="t" style="left:455px;top:766px;font-size:13px;line-height:18px;color:#222">(brak)</div>
<div class="t" style="left:566px;top:766px;font-size:13px;line-height:18px;color:#222">(brak)</div>
<div class="t" style="left:677px;top:766px;font-size:13px;line-height:18px;color:#222">14-01-20...</div>
<div class="t" style="left:750px;top:766px;font-size:13px;line-height:18px;color:#222">9/2026</div>
<div style="position:absolute;left:227px;top:785px;width:778px;height:25px;background:#ffffff"></div>
<div style="position:absolute;left:233px;top:790px;width:17px;height:17px;border:1px solid #c9c9c9;box-sizing:border-box;background:#fff"></div>
<div style="position:absolute;left:258px;top:785px;width:0;height:25px;border-left:1px dotted #e4e4e4"></div>
<div class="t" style="left:346px;top:791px;font-size:13px;line-height:18px;color:#222">16-01-2026</div>
<div class="t" style="left:455px;top:791px;font-size:13px;line-height:18px;color:#222">(brak)</div>
<div class="t" style="left:566px;top:791px;font-size:13px;line-height:18px;color:#222">(brak)</div>
<div class="t" style="left:677px;top:791px;font-size:13px;line-height:18px;color:#222">14-01-20...</div>
<div class="t" style="left:750px;top:791px;font-size:13px;line-height:18px;color:#222">9/2026</div>
<div style="position:absolute;left:227px;top:810px;width:778px;height:26px;background:#f5f5f5"></div>
<div style="position:absolute;left:233px;top:815px;width:17px;height:17px;border:1px solid #c9c9c9;box-sizing:border-box;background:#fff"></div>
<div style="position:absolute;left:258px;top:810px;width:0;height:26px;border-left:1px dotted #e4e4e4"></div>
<div class="t" style="left:346px;top:816px;font-size:13px;line-height:18px;color:#222">16-01-2026</div>
<div class="t" style="left:455px;top:816px;font-size:13px;line-height:18px;color:#222">(brak)</div>
<div class="t" style="left:566px;top:816px;font-size:13px;line-height:18px;color:#222">(brak)</div>
<div class="t" style="left:677px;top:816px;font-size:13px;line-height:18px;color:#222">14-01-20...</div>
<div class="t" style="left:750px;top:816px;font-size:13px;line-height:18px;color:#222">9/2026</div>
<div style="position:absolute;left:227px;top:836px;width:778px;height:25px;background:#ffffff"></div>
<div style="position:absolute;left:233px;top:840px;width:17px;height:17px;border:1px solid #c9c9c9;box-sizing:border-box;background:#fff"></div>
<div style="position:absolute;left:258px;top:836px;width:0;height:25px;border-left:1px dotted #e4e4e4"></div>
<div class="t" style="left:346px;top:841px;font-size:13px;line-height:18px;color:#222">19-01-2026</div>
<div class="t" style="left:455px;top:841px;font-size:13px;line-height:18px;color:#222">(brak)</div>
<div class="t" style="left:566px;top:841px;font-size:13px;line-height:18px;color:#222">(brak)</div>
<div class="t" style="left:677px;top:841px;font-size:13px;line-height:18px;color:#222">14-01-20...</div>
<div class="t" style="left:750px;top:841px;font-size:13px;line-height:18px;color:#222">1/2026</div>
<div style="position:absolute;left:227px;top:861px;width:778px;height:25px;background:#f5f5f5"></div>
<div style="position:absolute;left:233px;top:866px;width:17px;height:17px;border:1px solid #c9c9c9;box-sizing:border-box;background:#fff"></div>
<div style="position:absolute;left:258px;top:861px;width:0;height:25px;border-left:1px dotted #e4e4e4"></div>
<div class="t" style="left:346px;top:867px;font-size:13px;line-height:18px;color:#222">19-01-2026</div>
<div class="t" style="left:455px;top:867px;font-size:13px;line-height:18px;color:#222">(brak)</div>
<div class="t" style="left:566px;top:867px;font-size:13px;line-height:18px;color:#222">(brak)</div>
<div class="t" style="left:677px;top:867px;font-size:13px;line-height:18px;color:#222">14-01-20...</div>
<div class="t" style="left:750px;top:867px;font-size:13px;line-height:18px;color:#222">1/2026</div>
<div style="position:absolute;left:227px;top:886px;width:778px;height:26px;background:#ffffff"></div>
<div style="position:absolute;left:227px;top:912px;width:778px;height:25px;background:#f5f5f5"></div>
<div style="position:absolute;left:227px;top:937px;width:778px;height:25px;background:#ffffff"></div>
<svg style="position:absolute;left:236px;top:287px" width="14" height="11" viewBox="0 0 14 11"><path d="M1.2 5.8 L5 9.3 L12.8 2" fill="none" stroke="#1a9ee0" stroke-width="2.8"/></svg>
<svg style="position:absolute;left:260px;top:861px" width="8" height="8" viewBox="0 0 8 8"><path d="M0 0 H8 L0 8 Z" fill="#3cba3c"/></svg>
<div style="position:absolute;left:227px;top:965px;width:801px;height:78px;background:#f9f9f9"></div>
<div style="position:absolute;left:227px;top:970px;width:796px;height:1.5px;background:#dedede"></div>
<div class="t" style="left:262px;top:1006px;font-size:13px;line-height:18px;color:#333">Dokumentów: 1 z 24</div>
<div style="position:absolute;left:766px;top:996px;width:222px;height:35px;background:#1e9ae0;border-radius:2px"></div>
<div class="t" style="left:766px;top:1004px;width:222px;text-align:center;font-size:15px;line-height:19px;color:#fff;font-weight:700">WPROWADŹ DOKUMENTY</div>
<div style="position:absolute;left:1028px;top:82px;width:890px;height:961px;background:#f0f0f0"></div>
<div style="position:absolute;left:1028px;top:83px;width:3px;height:960px;background:#1e9ae0"></div>
<div style="position:absolute;left:1031px;top:83px;width:887px;height:49px;background:#1e9fe0"></div>
<div class="p" style="left:1174px;width:600px;text-align:center;top:96.5px;font-size:13px;line-height:17px;color:#fff;font-weight:700;">FS 8 2026.pdf</div>
<div style="position:absolute;left:1031px;top:132px;width:887px;height:44px;background:#f3f3f3"></div>
<div style="position:absolute;left:1031px;top:175px;width:887px;height:1px;background:#dedede"></div>
<svg style="position:absolute;left:1320px;top:138px" width="310" height="32" viewBox="0 0 310 32"><path d="M9.48 19.50 A6.6 6.6 0 1 0 9.22 13.41" fill="none" stroke="#0f86bd" stroke-width="1.7"/><path d="M7.20 9.40 L7.00 16.30 L13.30 13.80 Z" fill="#0f86bd"/><path d="M54.02 19.50 A6.6 6.6 0 1 1 54.28 13.41" fill="none" stroke="#0f86bd" stroke-width="1.7"/><path d="M56.30 9.40 L56.50 16.30 L50.20 13.80 Z" fill="#0f86bd"/><rect x="80.09999999999991" y="8.099999999999994" width="2.6" height="15.6" fill="#0f86bd"/><path d="M72.30 16.20 L77.90 11.40 L77.90 21.00 Z M90.50 16.20 L84.90 11.40 L84.90 21.00 Z" fill="#0f86bd"/><circle cx="163.9000000000001" cy="16" r="6.8" fill="none" stroke="#0f86bd" stroke-width="1.4"/><path d="M159.80 16.00 H168 M163.90 11.90 V20.099999999999994" stroke="#0f86bd" stroke-width="1.8"/><circle cx="196.9000000000001" cy="16" r="6.8" fill="none" stroke="#0f86bd" stroke-width="1.4"/><path d="M192.80 16.00 H201" stroke="#0f86bd" stroke-width="1.8"/><path d="M224.74 13.05 A6.3 6.3 0 0 1 236.12 14.05 M235.66 19.35 A6.3 6.3 0 0 1 224.28 18.35" fill="none" stroke="#0f86bd" stroke-width="1.7"/><path d="M222.50 9.50 L222.50 15.50 L228.00 12.50 Z M237.90 22.60 L237.90 16.60 L232.40 19.60 Z" fill="#0f86bd"/><path d="M255.90 23.80 V8.800000000000011 H268.20000000000005 L270.10 10.70 V23.80000000000001" fill="none" stroke="#0f86bd" stroke-width="1.3"/><path d="M263.20 12.80 V20.80000000000001" stroke="#0f86bd" stroke-width="1.8"/><path d="M260.50 14.30 L263.20 11.50 L265.90 14.30 Z M260.50 19.30 L263.20 22.10 L265.90 19.30 Z" fill="#0f86bd"/><rect x="286.0999999999999" y="6" width="19.8" height="19.9" fill="#c6dfea"/><path d="M288.30 23.80 V8.800000000000011 H301.5999999999999 L303.40 10.70 V23.80000000000001" fill="none" stroke="#555" stroke-width="1.3"/><path d="M292.00 17.50 H300" stroke="#555" stroke-width="1.8"/><path d="M293.30 14.80 L290.30 17.50 L293.30 20.20 Z M298.70 14.80 L301.70 17.50 L298.70 20.20 Z" fill="#555"/></svg>
<svg style="position:absolute;left:1031px;top:195px" width="38" height="135" viewBox="1031 195 38 135">
 <path d="M1049.5 208 H1043 Q1042.2 208 1042.2 208.8 V225 Q1042.2 225.8 1043 225.8 H1046" fill="none" stroke="#666" stroke-width="1.8"/>
 <path d="M1049.5 208 L1055.5 213.5 V215" fill="none" stroke="#666" stroke-width="1.8"/>
 <path d="M1049.5 207.5 V213.8 H1056 Z" fill="#666"/>
 <path d="M1045.5 216.8 H1052.5 M1045.5 220.5 H1050" stroke="#666" stroke-width="1.6"/>
 <path d="M1050 226.5 L1057.5 219" stroke="#666" stroke-width="2.6"/>
 <path d="M1040 254 H1054 V262.5 H1045 L1040.2 266 Z" fill="none" stroke="#666" stroke-width="1.9"/>
 <path d="M1058.8 258.5 V272.5 L1055.5 269 H1044.5" fill="none" stroke="#666" stroke-width="1.9"/>
 <path d="M1042.6 309 V300 H1050.5 L1056.5 306 V318 H1049" fill="none" stroke="#b0b0b0" stroke-width="1.6"/>
 <path d="M1050.5 300 V306 H1056.5 Z" fill="#b0b0b0"/>
 <path d="M1045.5 308.5 H1048.5 M1045.5 312 H1052 M1050 315 H1053" stroke="#b0b0b0" stroke-width="1.4"/>
 <path d="M1038 315 L1041.5 319 L1050 311" fill="none" stroke="#b0b0b0" stroke-width="1.7"/>
</svg>
<div style="position:absolute;left:1068px;top:176px;width:1px;height:837px;background:#e4e4e4"></div>
<div style="position:absolute;left:1069px;top:176px;width:849px;height:837px;background:#ffffff"></div>
<div style="position:absolute;left:1069px;top:1013px;width:849px;height:30px;background:#f0f0f0"></div>
<svg style="position:absolute;left:1486px;top:1025px" width="18" height="18" viewBox="0 0 18 18"><circle cx="7" cy="7" r="5.2" fill="none" stroke="#0f86bd" stroke-width="2.2"/><path d="M11 11 L16 16" stroke="#0f86bd" stroke-width="2.6"/></svg>
<div class="p" style="left:1133px;top:206.0px;font-size:14px;line-height:18px;color:#111;font-weight:400;">PHU Chłodnik</div>
<div class="p" style="left:1133px;top:222.0px;font-size:14px;line-height:18px;color:#111;font-weight:400;">Bławatkowa 25/3, 54-445 Wrocław</div>
<div class="p" style="left:1133px;top:238.0px;font-size:14px;line-height:18px;color:#111;font-weight:400;">Tel.: 354-65-89, NIP:</div>
<div class="p" style="left:1133px;top:254.0px;font-size:14px;line-height:18px;color:#111;font-weight:400;">Bank Testowy,</div>
<div style="position:absolute;left:1266px;top:242px;width:92px;height:20px;background:#f4f4f4;filter:blur(1.5px)"></div>
<div style="position:absolute;left:1272px;top:247px;width:74px;height:10px;background:#d4d4d4;filter:blur(3px)"></div>
<div style="position:absolute;left:1127px;top:270px;width:221px;height:26px;background:#f5f5f5;filter:blur(1.5px)"></div>
<div style="position:absolute;left:1133px;top:276px;width:200px;height:12px;background:#d8d8d8;filter:blur(3px)"></div>
<div style="position:absolute;left:1623px;top:196px;width:269px;height:2px;background:#333"></div>
<div style="position:absolute;left:1623px;top:198px;width:269px;height:18px;background:#dcdcdc"></div>
<div class="p" style="left:1457px;width:600px;text-align:center;top:198.0px;font-size:14px;line-height:18px;color:#111;font-weight:400;">Miejsce wystawienia:</div>
<div class="p" style="left:1457px;width:600px;text-align:center;top:219.0px;font-size:14px;line-height:18px;color:#111;font-weight:400;">Wrocław</div>
<div style="position:absolute;left:1623px;top:240px;width:269px;height:2px;background:#333"></div>
<div style="position:absolute;left:1623px;top:242px;width:269px;height:18px;background:#dcdcdc"></div>
<div class="p" style="left:1457px;width:600px;text-align:center;top:242.0px;font-size:14px;line-height:18px;color:#111;font-weight:400;">Data zakończenia dostawy/usług</div>
<div class="p" style="left:1457px;width:600px;text-align:center;top:263.0px;font-size:14px;line-height:18px;color:#111;font-weight:400;">14.01.2026</div>
<div style="position:absolute;left:1623px;top:288px;width:269px;height:2px;background:#333"></div>
<div style="position:absolute;left:1623px;top:290px;width:269px;height:18px;background:#dcdcdc"></div>
<div class="p" style="left:1457px;width:600px;text-align:center;top:290.0px;font-size:14px;line-height:18px;color:#111;font-weight:400;">Data wystawienia:</div>
<div class="p" style="left:1457px;width:600px;text-align:center;top:311.0px;font-size:14px;line-height:18px;color:#111;font-weight:400;">14.01.2026</div>
<div style="position:absolute;left:1623px;top:332px;width:269px;height:1px;background:#888"></div>
<div style="position:absolute;left:1125px;top:372px;width:359px;height:2px;background:#333"></div>
<div style="position:absolute;left:1125px;top:374px;width:359px;height:19px;background:#dcdcdc"></div>
<div class="p" style="left:1005px;width:600px;text-align:center;top:374.0px;font-size:14px;line-height:18px;color:#111;font-weight:400;">Sprzedawca:</div>
<div class="p" style="left:1127px;top:390.0px;font-size:14px;line-height:18px;color:#111;font-weight:400;">PHU Chłodnik</div>
<div class="p" style="left:1127px;top:408.0px;font-size:14px;line-height:18px;color:#111;font-weight:400;">Bławatkowa 25/3</div>
<div class="p" style="left:1127px;top:425.0px;font-size:14px;line-height:18px;color:#111;font-weight:400;">54-445 Wrocław</div>
<div class="p" style="left:1127px;top:441.0px;font-size:14px;line-height:18px;color:#111;font-weight:400;">NIP:</div>
<div style="position:absolute;left:1125px;top:459px;width:359px;height:1.5px;background:#333"></div>
<div style="position:absolute;left:1157px;top:443px;width:92px;height:15px;background:#f3f3f3;filter:blur(1.5px)"></div>
<div style="position:absolute;left:1161px;top:446px;width:78px;height:9px;background:#d6d6d6;filter:blur(2.5px)"></div>
<div style="position:absolute;left:1533px;top:372px;width:359px;height:2px;background:#333"></div>
<div style="position:absolute;left:1533px;top:374px;width:359px;height:19px;background:#dcdcdc"></div>
<div class="p" style="left:1413px;width:600px;text-align:center;top:374.0px;font-size:14px;line-height:18px;color:#111;font-weight:400;">Nabywca:</div>
<div class="p" style="left:1535px;top:390.0px;font-size:14px;line-height:18px;color:#111;font-weight:400;">AD-MAR s.c.</div>
<div class="p" style="left:1535px;top:408.0px;font-size:14px;line-height:18px;color:#111;font-weight:400;">Romanowskiego 23</div>
<div class="p" style="left:1535px;top:425.0px;font-size:14px;line-height:18px;color:#111;font-weight:400;">46-020 Bierkowice</div>
<div class="p" style="left:1535px;top:441.0px;font-size:14px;line-height:18px;color:#111;font-weight:400;">NIP:</div>
<div style="position:absolute;left:1533px;top:459px;width:359px;height:1.5px;background:#333"></div>
<div style="position:absolute;left:1565px;top:443px;width:92px;height:15px;background:#f3f3f3;filter:blur(1.5px)"></div>
<div style="position:absolute;left:1569px;top:446px;width:78px;height:9px;background:#d6d6d6;filter:blur(2.5px)"></div>
<div class="p" style="left:1210px;width:600px;text-align:center;top:478.5px;font-size:20.5px;line-height:27px;color:#111;font-weight:400;">Faktura VAT&nbsp; 8/2026 oryginał</div>
<div style="position:absolute;left:1124px;top:524px;width:766px;height:45px;background:#dcdcdc"></div>
<div style="position:absolute;left:1124px;top:524px;width:767px;height:1.3px;background:#222"></div>
<div style="position:absolute;left:1124px;top:569px;width:767px;height:1.3px;background:#222"></div>
<div style="position:absolute;left:1124px;top:590px;width:767px;height:1.3px;background:#222"></div>
<div style="position:absolute;left:1124px;top:612px;width:767px;height:1.3px;background:#222"></div>
<div style="position:absolute;left:1124px;top:633px;width:767px;height:1.3px;background:#222"></div>
<div style="position:absolute;left:1124px;top:524px;width:1.3px;height:110px;background:#222"></div>
<div style="position:absolute;left:1153px;top:524px;width:1.3px;height:110px;background:#222"></div>
<div style="position:absolute;left:1349px;top:524px;width:1.3px;height:110px;background:#222"></div>
<div style="position:absolute;left:1443px;top:524px;width:1.3px;height:110px;background:#222"></div>
<div style="position:absolute;left:1508px;top:524px;width:1.3px;height:110px;background:#222"></div>
<div style="position:absolute;left:1537px;top:524px;width:1.3px;height:110px;background:#222"></div>
<div style="position:absolute;left:1615px;top:524px;width:1.3px;height:110px;background:#222"></div>
<div style="position:absolute;left:1648px;top:524px;width:1.3px;height:110px;background:#222"></div>
<div style="position:absolute;left:1730px;top:524px;width:1.3px;height:110px;background:#222"></div>
<div style="position:absolute;left:1808px;top:524px;width:1.3px;height:110px;background:#222"></div>
<div style="position:absolute;left:1890px;top:524px;width:1.3px;height:110px;background:#222"></div>
<div class="p" style="left:1124px;width:29px;text-align:center;top:525px;font-size:12px;line-height:14px;color:#111">Lp</div>
<div class="p" style="left:1153px;width:196px;text-align:center;top:525px;font-size:12px;line-height:14px;color:#111">Nazwa</div>
<div class="p" style="left:1349px;width:94px;text-align:center;top:525px;font-size:12px;line-height:14px;color:#111">Kod CN/PKWiU</div>
<div class="p" style="left:1443px;width:65px;text-align:center;top:525px;font-size:12px;line-height:14px;color:#111">Ilość</div>
<div class="p" style="left:1508px;width:29px;text-align:center;top:525px;font-size:12px;line-height:14px;color:#111">j.m.</div>
<div class="p" style="left:1537px;width:78px;text-align:center;top:525px;font-size:12px;line-height:14px;color:#111">Cena<br>jednostkowa<br>netto</div>
<div class="p" style="left:1615px;width:33px;text-align:center;top:525px;font-size:12px;line-height:14px;color:#111">VAT<br>[%]</div>
<div class="p" style="left:1648px;width:82px;text-align:center;top:525px;font-size:12px;line-height:14px;color:#111">Wartość netto</div>
<div class="p" style="left:1730px;width:78px;text-align:center;top:525px;font-size:12px;line-height:14px;color:#111">Kwota VAT</div>
<div class="p" style="left:1808px;width:82px;text-align:center;top:525px;font-size:12px;line-height:14px;color:#111">Wartość brutto</div>
<div class="p" style="left:838.5px;width:600px;text-align:center;top:570.5px;font-size:12.5px;line-height:16px;color:#111;font-weight:400;">1</div>
<div class="p" style="left:1155px;top:570.5px;font-size:12.2px;line-height:16px;color:#111;font-weight:400;">Dezodorant 100ml</div>
<div class="p" style="left:1351px;top:570.5px;font-size:12.2px;line-height:16px;color:#111;font-weight:400;"></div>
<div class="p" style="left:1107px;width:400px;text-align:right;top:570.5px;font-size:12.5px;line-height:16px;color:#111;font-weight:400;">5,000</div>
<div class="p" style="left:1222.5px;width:600px;text-align:center;top:570.5px;font-size:12.5px;line-height:16px;color:#111;font-weight:400;">szt.</div>
<div class="p" style="left:1214px;width:400px;text-align:right;top:570.5px;font-size:12.5px;line-height:16px;color:#111;font-weight:400;">42,00</div>
<div class="p" style="left:1331.5px;width:600px;text-align:center;top:570.5px;font-size:12.5px;line-height:16px;color:#111;font-weight:400;">23</div>
<div class="p" style="left:1329px;width:400px;text-align:right;top:570.5px;font-size:12.5px;line-height:16px;color:#111;font-weight:400;">210,00</div>
<div class="p" style="left:1407px;width:400px;text-align:right;top:570.5px;font-size:12.5px;line-height:16px;color:#111;font-weight:400;">48,30</div>
<div class="p" style="left:1489px;width:400px;text-align:right;top:570.5px;font-size:12.5px;line-height:16px;color:#111;font-weight:400;">258,30</div>
<div class="p" style="left:838.5px;width:600px;text-align:center;top:592.0px;font-size:12.5px;line-height:16px;color:#111;font-weight:400;">2</div>
<div class="p" style="left:1155px;top:592.0px;font-size:12.2px;line-height:16px;color:#111;font-weight:400;">Black Tiger woda toaletowa 150ml</div>
<div class="p" style="left:1351px;top:592.0px;font-size:12.2px;line-height:16px;color:#111;font-weight:400;"></div>
<div class="p" style="left:1107px;width:400px;text-align:right;top:592.0px;font-size:12.5px;line-height:16px;color:#111;font-weight:400;">3,000</div>
<div class="p" style="left:1222.5px;width:600px;text-align:center;top:592.0px;font-size:12.5px;line-height:16px;color:#111;font-weight:400;">szt.</div>
<div class="p" style="left:1214px;width:400px;text-align:right;top:592.0px;font-size:12.5px;line-height:16px;color:#111;font-weight:400;">16,00</div>
<div class="p" style="left:1331.5px;width:600px;text-align:center;top:592.0px;font-size:12.5px;line-height:16px;color:#111;font-weight:400;">23</div>
<div class="p" style="left:1329px;width:400px;text-align:right;top:592.0px;font-size:12.5px;line-height:16px;color:#111;font-weight:400;">48,00</div>
<div class="p" style="left:1407px;width:400px;text-align:right;top:592.0px;font-size:12.5px;line-height:16px;color:#111;font-weight:400;">11,04</div>
<div class="p" style="left:1489px;width:400px;text-align:right;top:592.0px;font-size:12.5px;line-height:16px;color:#111;font-weight:400;">59,04</div>
<div class="p" style="left:838.5px;width:600px;text-align:center;top:613.5px;font-size:12.5px;line-height:16px;color:#111;font-weight:400;">3</div>
<div class="p" style="left:1155px;top:613.5px;font-size:12.2px;line-height:16px;color:#111;font-weight:400;">Dostawa</div>
<div class="p" style="left:1351px;top:613.5px;font-size:12.2px;line-height:16px;color:#111;font-weight:400;"></div>
<div class="p" style="left:1107px;width:400px;text-align:right;top:613.5px;font-size:12.5px;line-height:16px;color:#111;font-weight:400;">1,000</div>
<div class="p" style="left:1222.5px;width:600px;text-align:center;top:613.5px;font-size:12.5px;line-height:16px;color:#111;font-weight:400;">szt.</div>
<div class="p" style="left:1214px;width:400px;text-align:right;top:613.5px;font-size:12.5px;line-height:16px;color:#111;font-weight:400;">21,00</div>
<div class="p" style="left:1331.5px;width:600px;text-align:center;top:613.5px;font-size:12.5px;line-height:16px;color:#111;font-weight:400;">23</div>
<div class="p" style="left:1329px;width:400px;text-align:right;top:613.5px;font-size:12.5px;line-height:16px;color:#111;font-weight:400;">21,00</div>
<div class="p" style="left:1407px;width:400px;text-align:right;top:613.5px;font-size:12.5px;line-height:16px;color:#111;font-weight:400;">4,83</div>
<div class="p" style="left:1489px;width:400px;text-align:right;top:613.5px;font-size:12.5px;line-height:16px;color:#111;font-weight:400;">25,83</div>
<div style="position:absolute;left:1410px;top:647px;width:480px;height:21px;background:#dcdcdc"></div>
<div style="position:absolute;left:1410px;top:647px;width:481px;height:1.3px;background:#222"></div>
<div style="position:absolute;left:1410px;top:668px;width:481px;height:1.3px;background:#222"></div>
<div style="position:absolute;left:1410px;top:690px;width:481px;height:1.3px;background:#222"></div>
<div style="position:absolute;left:1410px;top:647px;width:1.3px;height:44px;background:#222"></div>
<div style="position:absolute;left:1632px;top:647px;width:1.3px;height:44px;background:#222"></div>
<div style="position:absolute;left:1717px;top:647px;width:1.3px;height:44px;background:#222"></div>
<div style="position:absolute;left:1803px;top:647px;width:1.3px;height:44px;background:#222"></div>
<div style="position:absolute;left:1890px;top:647px;width:1.3px;height:44px;background:#222"></div>
<div class="p" style="left:1221.0px;width:600px;text-align:center;top:650.0px;font-size:12px;line-height:16px;color:#111;font-weight:400;">według stawki VAT</div>
<div class="p" style="left:1374.5px;width:600px;text-align:center;top:650.0px;font-size:12px;line-height:16px;color:#111;font-weight:400;">wartość netto</div>
<div class="p" style="left:1460.0px;width:600px;text-align:center;top:650.0px;font-size:12px;line-height:16px;color:#111;font-weight:400;">kwota VAT</div>
<div class="p" style="left:1546.5px;width:600px;text-align:center;top:650.0px;font-size:12px;line-height:16px;color:#111;font-weight:400;">wartość brutto</div>
<div class="p" style="left:1413px;top:670.0px;font-size:12px;line-height:16px;color:#111;font-weight:400;">Podstawowy podatek VAT 23%</div>
<div class="p" style="left:1316px;width:400px;text-align:right;top:670.0px;font-size:12px;line-height:16px;color:#111;font-weight:400;">279,00</div>
<div class="p" style="left:1402px;width:400px;text-align:right;top:670.0px;font-size:12px;line-height:16px;color:#111;font-weight:400;">64,17</div>
<div class="p" style="left:1489px;width:400px;text-align:right;top:670.0px;font-size:12px;line-height:16px;color:#111;font-weight:400;">343,17</div>
<div class="p" style="left:1186px;width:400px;text-align:right;top:691.0px;font-size:12px;line-height:16px;color:#111;font-weight:400;">Razem:</div>
<div class="p" style="left:1315px;width:400px;text-align:right;top:691.0px;font-size:12px;line-height:16px;color:#111;font-weight:400;">279,00</div>
<div class="p" style="left:1401px;width:400px;text-align:right;top:691.0px;font-size:12px;line-height:16px;color:#111;font-weight:400;">64,17</div>
<div class="p" style="left:1488px;width:400px;text-align:right;top:691.0px;font-size:12px;line-height:16px;color:#111;font-weight:400;">343,17</div>
<div class="p" style="left:864px;width:400px;text-align:right;top:718.0px;font-size:14px;line-height:18px;color:#111;font-weight:700;">Zapłacono gotówką:</div>
<div class="p" style="left:1293px;top:718.0px;font-size:14px;line-height:18px;color:#111;font-weight:400;">343,17</div>
<div style="position:absolute;left:1487px;top:719px;width:404px;height:2px;background:#333"></div>
<div style="position:absolute;left:1487px;top:721px;width:404px;height:25px;background:#dcdcdc"></div>
<div class="p" style="left:1489px;top:721.0px;font-size:17px;line-height:22px;color:#111;font-weight:700;">Razem do zapłaty:</div>
<div class="p" style="left:1491px;width:400px;text-align:right;top:721.0px;font-size:17px;line-height:22px;color:#111;font-weight:700;">343,17</div>
<div class="p" style="left:1488px;top:747.0px;font-size:14px;line-height:18px;color:#111;font-weight:700;">Słownie:</div>
<div class="p" style="left:1565px;top:746.5px;font-size:14.25px;line-height:19px;color:#111;font-weight:400;">trzysta czterdzieści trzy&nbsp; PLN 17/100</div>
<div style="position:absolute;left:1487px;top:773px;width:404px;height:2px;background:#333"></div>
<div style="position:absolute;left:1125px;top:807px;width:340px;height:111px;border:1.3px solid #8c8c8c;border-bottom-color:#333;box-sizing:border-box"></div>
<div style="position:absolute;left:1129px;top:812px;width:332px;height:17px;background:#dcdcdc"></div>
<div class="p" style="left:995.0px;width:600px;text-align:center;top:811.0px;font-size:14px;line-height:18px;color:#111;font-weight:700;">Wystawił(a):</div>
<div class="p" style="left:995.0px;width:600px;text-align:center;top:831.0px;font-size:14px;line-height:18px;color:#111;font-weight:400;">Szef</div>
<div class="p" style="left:995.0px;width:600px;text-align:center;top:916.5px;font-size:10px;line-height:13px;color:#111;font-weight:400;">Podpis osoby upoważnionej do wystawienia faktury VAT</div>
<div style="position:absolute;left:1555px;top:807px;width:338px;height:111px;border:1.3px solid #8c8c8c;border-bottom-color:#333;box-sizing:border-box"></div>
<div style="position:absolute;left:1559px;top:812px;width:330px;height:17px;background:#dcdcdc"></div>
<div class="p" style="left:1424.0px;width:600px;text-align:center;top:811.0px;font-size:14px;line-height:18px;color:#111;font-weight:700;">Odebrał(a):</div>
<div class="p" style="left:1424.0px;width:600px;text-align:center;top:831.0px;font-size:14px;line-height:18px;color:#111;font-weight:400;">Janina Herbuska</div>
<div class="p" style="left:1424.0px;width:600px;text-align:center;top:916.5px;font-size:10px;line-height:13px;color:#111;font-weight:400;">Podpis osoby upoważnionej do odbioru faktury VAT</div>
<div style="position:absolute;left:481px;top:83px;width:446px;height:640px;background:#fff;border:1px solid #4aa6e6;box-sizing:border-box;box-shadow:3px 3px 4px rgba(0,0,0,0.33)"></div>
<div style="position:absolute;left:482px;top:696px;width:444px;height:25px;background:#d3e9f8"></div>
<div class="t" style="left:522px;top:90px;font-size:13.2px;line-height:18px;color:#111">KPiR</div>
<svg style="position:absolute;left:908px;top:94px" width="6" height="10" viewBox="0 0 6 10"><path d="M1.2 1 L4.6 4.5 L1.2 8" fill="none" stroke="#111" stroke-width="1.6"/></svg>
<svg style="position:absolute;left:492px;top:89px" width="16" height="16" viewBox="0 0 16 16"><path d="M8 0.5 V15.5 M0.5 8 H15.5" stroke="#127a12" stroke-width="3"/></svg>
<div class="t" style="left:522px;top:114px;font-size:13.2px;line-height:18px;color:#111">Sprzedaż VAT</div>
<svg style="position:absolute;left:908px;top:118px" width="6" height="10" viewBox="0 0 6 10"><path d="M1.2 1 L4.6 4.5 L1.2 8" fill="none" stroke="#111" stroke-width="1.6"/></svg>
<svg style="position:absolute;left:492px;top:113px" width="16" height="16" viewBox="0 0 16 16"><path d="M8 0.5 V15.5 M0.5 8 H15.5" stroke="#127a12" stroke-width="3"/></svg>
<div class="t" style="left:522px;top:138px;font-size:13.2px;line-height:18px;color:#111">Sprzedaż VAT OSS</div>
<svg style="position:absolute;left:908px;top:142px" width="6" height="10" viewBox="0 0 6 10"><path d="M1.2 1 L4.6 4.5 L1.2 8" fill="none" stroke="#111" stroke-width="1.6"/></svg>
<svg style="position:absolute;left:492px;top:137px" width="16" height="16" viewBox="0 0 16 16"><path d="M8 0.5 V15.5 M0.5 8 H15.5" stroke="#127a12" stroke-width="3"/></svg>
<div class="t" style="left:522px;top:162px;font-size:13.2px;line-height:18px;color:#111">Zakup VAT</div>
<svg style="position:absolute;left:908px;top:166px" width="6" height="10" viewBox="0 0 6 10"><path d="M1.2 1 L4.6 4.5 L1.2 8" fill="none" stroke="#111" stroke-width="1.6"/></svg>
<svg style="position:absolute;left:492px;top:161px" width="16" height="16" viewBox="0 0 16 16"><path d="M8 0.5 V15.5 M0.5 8 H15.5" stroke="#127a12" stroke-width="3"/></svg>
<div class="t" style="left:522px;top:187px;font-size:13.2px;line-height:18px;color:#111">Powiąż z</div>
<svg style="position:absolute;left:908px;top:191px" width="6" height="10" viewBox="0 0 6 10"><path d="M1.2 1 L4.6 4.5 L1.2 8" fill="none" stroke="#111" stroke-width="1.6"/></svg>
<div style="position:absolute;left:522px;top:210px;width:391px;height:1px;background:#e2e2e2"></div>
<div class="t" style="left:522px;top:218px;font-size:13.2px;line-height:18px;color:#111">Dekretuj</div>
<div class="t" style="left:830px;top:218px;font-size:13px;line-height:18px;color:#111">Ctrl+Shift+R</div>
<div class="t" style="left:522px;top:243px;font-size:13.2px;line-height:18px;color:#111">Dekretuj automatycznie</div>
<svg style="position:absolute;left:908px;top:247px" width="6" height="10" viewBox="0 0 6 10"><path d="M1.2 1 L4.6 4.5 L1.2 8" fill="none" stroke="#111" stroke-width="1.6"/></svg>
<div class="t" style="left:522px;top:267px;font-size:13.2px;line-height:18px;color:#111">Wycofaj dekretację</div>
<div class="t" style="left:830px;top:267px;font-size:13px;line-height:18px;color:#111">Ctrl+Delete</div>
<div style="position:absolute;left:522px;top:291px;width:391px;height:1px;background:#e2e2e2"></div>
<div class="t" style="left:522px;top:299px;font-size:13.2px;line-height:18px;color:#111">Przypisz schemat dekretacji</div>
<div class="t" style="left:522px;top:323px;font-size:13.2px;line-height:18px;color:#111">Automatyczny wybór schematu dekretacji</div>
<div style="position:absolute;left:522px;top:346px;width:391px;height:1px;background:#e2e2e2"></div>
<div class="t" style="left:522px;top:355px;font-size:13.2px;line-height:18px;color:#111">Usuń</div>
<div class="t" style="left:830px;top:355px;font-size:13px;line-height:18px;color:#111">Delete</div>
<div class="t" style="left:522px;top:379px;font-size:13.2px;line-height:18px;color:#111">Przywróć do obiegu</div>
<div class="t" style="left:830px;top:379px;font-size:13px;line-height:18px;color:#111">Ctrl+B</div>
<div style="position:absolute;left:522px;top:403px;width:391px;height:1px;background:#e2e2e2"></div>
<div class="t" style="left:522px;top:411px;font-size:13.2px;line-height:18px;color:#111">Zmień status przetworzenia</div>
<svg style="position:absolute;left:908px;top:415px" width="6" height="10" viewBox="0 0 6 10"><path d="M1.2 1 L4.6 4.5 L1.2 8" fill="none" stroke="#111" stroke-width="1.6"/></svg>
<div class="t" style="left:522px;top:435px;font-size:13.2px;line-height:18px;color:#111">Nie podlega księgowaniu</div>
<div class="t" style="left:830px;top:435px;font-size:13px;line-height:18px;color:#111">Ctrl+N</div>
<div class="t" style="left:522px;top:459px;font-size:13.2px;line-height:18px;color:#111">Cofnij - Nie podlega księgowaniu</div>
<div style="position:absolute;left:522px;top:483px;width:391px;height:1px;background:#e2e2e2"></div>
<div class="t" style="left:522px;top:491px;font-size:13.2px;line-height:18px;color:#111">Nadaj zbiorczo grupę</div>
<div class="t" style="left:830px;top:491px;font-size:13px;line-height:18px;color:#111">Ctrl+Alt+K</div>
<div class="t" style="left:522px;top:515px;font-size:13.2px;line-height:18px;color:#111">Nadaj zbiorczo typ dokumentu do dekretacji</div>
<div class="t" style="left:830px;top:515px;font-size:13px;line-height:18px;color:#111">Ctrl+Alt+T</div>
<div class="t" style="left:522px;top:540px;font-size:13.2px;line-height:18px;color:#111">Nadaj zbiorczo etykiety księgowe</div>
<div class="t" style="left:830px;top:540px;font-size:13px;line-height:18px;color:#111">Ctrl+Alt+E</div>
<div style="position:absolute;left:522px;top:564px;width:391px;height:1px;background:#e2e2e2"></div>
<div class="t" style="left:522px;top:572px;font-size:13.2px;line-height:18px;color:#111">Otwórz</div>
<div class="t" style="left:830px;top:572px;font-size:13px;line-height:18px;color:#111">F3</div>
<div class="t" style="left:522px;top:596px;font-size:13.2px;line-height:18px;color:#111">Pokaż zaksięgowane dokumenty</div>
<div class="t" style="left:830px;top:596px;font-size:13px;line-height:18px;color:#111">Ctrl+Z</div>
<div style="position:absolute;left:522px;top:620px;width:391px;height:1px;background:#e2e2e2"></div>
<div class="t" style="left:522px;top:628px;font-size:13.2px;line-height:18px;color:#111">Dokumenty powiązane</div>
<div class="t" style="left:830px;top:628px;font-size:13px;line-height:18px;color:#111">Ctrl+E</div>
<div class="t" style="left:522px;top:652px;font-size:13.2px;line-height:18px;color:#111">Drukuj</div>
<div class="t" style="left:830px;top:652px;font-size:13px;line-height:18px;color:#111">Ctrl+P</div>
<div class="t" style="left:522px;top:676px;font-size:13.2px;line-height:18px;color:#111">Wyślij e-mailem</div>
<div class="t" style="left:522px;top:700px;font-size:13.2px;line-height:18px;color:#111">Zapisz</div>
<svg style="position:absolute;left:908px;top:704px" width="6" height="10" viewBox="0 0 6 10"><path d="M1.2 1 L4.6 4.5 L1.2 8" fill="none" stroke="#111" stroke-width="1.6"/></svg>
<div style="position:absolute;left:922px;top:692px;width:300px;height:77px;background:#fff;border:1px solid #4aa6e6;box-sizing:border-box;box-shadow:3px 3px 4px rgba(0,0,0,0.33)"></div>
<div class="t" style="left:963px;top:699px;font-size:13px;line-height:18px;color:#111">Zapisz jako...</div>
<div class="t" style="left:963px;top:723px;font-size:13px;line-height:18px;color:#111">Zapisz wybrane</div>
<div class="t" style="left:963px;top:747px;font-size:13px;line-height:18px;color:#111">Zapisz do biblioteki załączników</div>
<div style="position:absolute;left:492px;top:348px;width:28px;height:28px;border-radius:50%;background:#1fc2a0;box-shadow:1px 2px 4px rgba(0,0,0,0.35)"></div>
<div class="t" style="left:492px;top:352px;width:28px;text-align:center;font-size:17px;line-height:22px;color:#fff;font-weight:700">1</div>
<div style="position:absolute;left:492px;top:376px;width:28px;height:28px;border-radius:50%;background:#1fc2a0;box-shadow:1px 2px 4px rgba(0,0,0,0.35)"></div>
<div class="t" style="left:492px;top:380px;width:28px;text-align:center;font-size:17px;line-height:22px;color:#fff;font-weight:700">2</div>
<div style="position:absolute;left:489px;top:565px;width:28px;height:28px;border-radius:50%;background:#1fc2a0;box-shadow:1px 2px 4px rgba(0,0,0,0.35)"></div>
<div class="t" style="left:489px;top:569px;width:28px;text-align:center;font-size:17px;line-height:22px;color:#fff;font-weight:700">3</div>
<div style="position:absolute;left:488px;top:639px;width:28px;height:28px;border-radius:50%;background:#1fc2a0;box-shadow:1px 2px 4px rgba(0,0,0,0.35)"></div>
<div class="t" style="left:488px;top:643px;width:28px;text-align:center;font-size:17px;line-height:22px;color:#fff;font-weight:700">4</div>
<div style="position:absolute;left:488px;top:667px;width:28px;height:28px;border-radius:50%;background:#1fc2a0;box-shadow:1px 2px 4px rgba(0,0,0,0.35)"></div>
<div class="t" style="left:488px;top:671px;width:28px;text-align:center;font-size:17px;line-height:22px;color:#fff;font-weight:700">5</div>
<div style="position:absolute;left:488px;top:695px;width:28px;height:28px;border-radius:50%;background:#1fc2a0;box-shadow:1px 2px 4px rgba(0,0,0,0.35)"></div>
<div class="t" style="left:488px;top:699px;width:28px;text-align:center;font-size:17px;line-height:22px;color:#fff;font-weight:700">6</div>
<div style="position:absolute;left:550px;top:43px;width:38px;height:38px;border-radius:50%;background:#1fc2a0;box-shadow:1px 2px 4px rgba(0,0,0,0.35)"></div>
<svg style="position:absolute;left:550px;top:43px" width="38" height="38" viewBox="0 0 38 38"><path d="M33 19.5 H7.5 M17.5 9.5 L7.5 19.5 L17.5 29.5" fill="none" stroke="#fff" stroke-width="3.8" stroke-linecap="round" stroke-linejoin="round"/></svg>
</body></html>
